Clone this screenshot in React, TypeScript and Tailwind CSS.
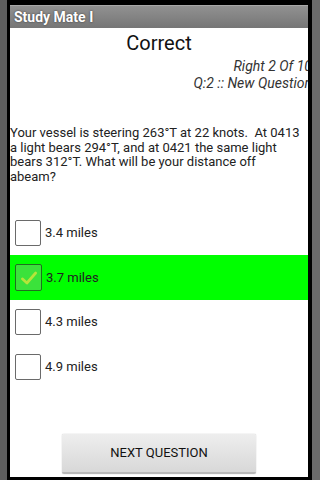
import React from "react";

const OPTIONS = [
  { label: "3.4 miles", checked: false },
  { label: "3.7 miles", checked: true },
  { label: "4.3 miles", checked: false },
  { label: "4.9 miles", checked: false },
];

function Box({ checked }: { checked: boolean }) {
  if (checked) {
    return (
      <div className="flex h-[27px] w-[27px] items-center justify-center rounded-[2px] border-[1.5px] border-[#1f6f1f] bg-[#3be23b]">
        <svg viewBox="0 0 24 24" className="h-[20px] w-[20px]">
          <path d="M4 13 L9.5 18 L20 6" fill="none" stroke="#b5e43a" strokeWidth="3.2" strokeLinecap="round" strokeLinejoin="round" />
        </svg>
      </div>
    );
  }
  return <div className="h-[26px] w-[26px] rounded-[2px] border-[1.5px] border-[#6a6a6a] bg-white" />;
}

export default function App() {
  return (
    <div className="flex h-[480px] w-[320px] bg-[#666666] font-['Roboto',sans-serif]">
      <div className="w-[7px] shrink-0 bg-[#5e5e5e]" />
      <div className="w-[3px] shrink-0 bg-black" />
      <div className="flex w-[298px] shrink-0 flex-col bg-black pt-[5px] pb-[3px]">
        <div className="flex h-[23px] items-center border-t border-[#a8a8a8] bg-gradient-to-b from-[#919191] to-[#767676] pl-[4px]">
          <span className="text-[14px] font-bold text-white [text-shadow:0_0_2px_#333]">Study Mate I</span>
        </div>
        <div className="flex flex-1 flex-col overflow-hidden bg-white text-[#1c1c1c]">
          <div className="mt-[3px] text-center text-[20px] leading-[24px] text-[#111]">Correct</div>
          <div className="mt-[3px] text-right text-[14px] italic leading-[17px] text-[#333]">
            <div className="-mr-[4px] whitespace-nowrap">Right 2 Of 10</div>
            <div className="-mr-[4px] whitespace-nowrap">Q:2 :: New Question</div>
          </div>
          <p className="mt-[34px] pr-[4px] text-[13px] leading-[14.7px] text-[#222]">
            Your vessel is steering 263°T at 22 knots.&nbsp; At 0413 a light bears 294°T, and at 0421 the same light bears
            312°T. What will be your distance off abeam?
          </p>
          <div className="mt-[26px] flex flex-col">
            {OPTIONS.map((o) => (
              <div
                key={o.label}
                className={`flex h-[44.5px] items-center gap-[4px] pl-[5px] ${o.checked ? "bg-[#00ff00]" : ""}`}
              >
                <Box checked={o.checked} />
                <span className="text-[13px] text-[#222]">{o.label}</span>
              </div>
            ))}
          </div>
          <div className="mt-auto mb-[3px] flex justify-center">
            <button className="h-[40px] w-[194px] rounded-[2px] border-b-2 border-[#b8b8b8] bg-gradient-to-b from-[#eeeeee] to-[#d8d8d8] text-[13px] text-[#111] shadow-[0_0_1px_#999]">
              NEXT QUESTION
            </button>
          </div>
        </div>
      </div>
      <div className="w-[4px] shrink-0 bg-black" />
      <div className="w-[8px] shrink-0 bg-[#6a6a6a]" />
    </div>
  );
}
